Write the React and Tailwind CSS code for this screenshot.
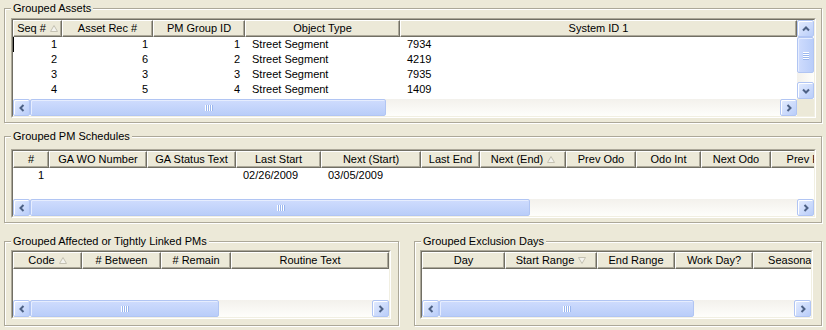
import React from "react";

const ASSET_COLS = [
  { label: "Seq #", w: "w-[49px]", sort: "up", align: "r" },
  { label: "Asset Rec #", w: "w-[91px]", align: "r" },
  { label: "PM Group ID", w: "w-[92px]", align: "r" },
  { label: "Object Type", w: "w-[155px]", align: "l" },
  { label: "System ID 1", w: "flex-1 min-w-0", align: "l" },
];

const ASSETS = [
  ["1", "1", "1", "Street Segment", "7934"],
  ["2", "6", "2", "Street Segment", "4219"],
  ["3", "3", "3", "Street Segment", "7935"],
  ["4", "5", "4", "Street Segment", "1409"],
];

const PM_COLS = [
  { label: "#", w: "w-[36px]", align: "r" },
  { label: "GA WO Number", w: "w-[98px]", align: "l" },
  { label: "GA Status Text", w: "w-[89px]", align: "l" },
  { label: "Last Start", w: "w-[85px]", align: "l" },
  { label: "Next (Start)", w: "w-[100px]", align: "l" },
  { label: "Last End", w: "w-[59px]", align: "l" },
  { label: "Next (End)", w: "w-[86px]", sort: "up", align: "l" },
  { label: "Prev Odo", w: "w-[70px]", align: "l" },
  { label: "Odo Int", w: "w-[65px]", align: "l" },
  { label: "Next Odo", w: "w-[70px]", align: "l" },
  { label: "Prev Hrs", w: "w-[74px]", align: "l" },
];

const PM_ROWS = [["1", "", "", "02/26/2009", "03/05/2009", "", "", "", "", "", ""]];

const LINK_COLS = [
  { label: "Code", w: "w-[69px]", sort: "up" },
  { label: "# Between", w: "w-[79px]" },
  { label: "# Remain", w: "w-[70px]" },
  { label: "Routine Text", w: "flex-1 min-w-0" },
];

const EXCL_COLS = [
  { label: "Day", w: "w-[83px]" },
  { label: "Start Range", w: "w-[92px]", sort: "down" },
  { label: "End Range", w: "w-[78px]" },
  { label: "Work Day?", w: "w-[78px]" },
  { label: "Seasonal", w: "w-[76px]" },
];

function Chevron({ dir }) {
  const pts = {
    left: "5.5,1 2.5,4 5.5,7",
    right: "2.5,1 5.5,4 2.5,7",
    up: "1,5.5 4,2.5 7,5.5",
    down: "1,2.5 4,5.5 7,2.5",
  }[dir];
  return (
    <svg width="8" height="8" viewBox="0 0 8 8">
      <polyline points={pts} fill="none" stroke="#4D6185" strokeWidth="2" />
    </svg>
  );
}

function ScrollButton({ dir }) {
  return (
    <div className="flex h-[17px] w-[17px] shrink-0 items-center justify-center rounded-[2px] border border-[#B1C5F3] bg-linear-to-br from-[#E4ECFE] to-[#B9CDF9] shadow-[inset_1px_1px_0_#fff]">
      <Chevron dir={dir} />
    </div>
  );
}

function Grip({ vertical }) {
  const lines = [0, 1, 2, 3];
  if (vertical) {
    return (
      <div className="flex flex-col gap-[1px]">
        {lines.map((i) => (
          <span key={i} className="block h-[1px] w-[6px] bg-white shadow-[0_1px_0_#9AB6EE]" />
        ))}
      </div>
    );
  }
  return (
    <div className="flex gap-[1px]">
      {lines.map((i) => (
        <span key={i} className="block h-[6px] w-[1px] bg-white shadow-[1px_0_0_#9AB6EE]" />
      ))}
    </div>
  );
}

function HScroll({ thumb, className }) {
  return (
    <div className={`flex h-[17px] shrink-0 bg-linear-to-b from-[#F3F1EC] to-[#FEFEFB] ${className}`}>
      <ScrollButton dir="left" />
      <div className="flex flex-1">
        <div
          className={`${thumb} flex items-center justify-center rounded-[2px] border border-[#B1C5F3] bg-linear-to-b from-[#CFDCFD] to-[#B9CDF9] shadow-[inset_1px_1px_0_#E6EDFE]`}
        >
          <Grip />
        </div>
      </div>
      <ScrollButton dir="right" />
    </div>
  );
}

function VScroll() {
  return (
    <div className="flex h-full w-[17px] shrink-0 flex-col bg-linear-to-r from-[#F3F1EC] to-[#FEFEFB]">
      <ScrollButton dir="up" />
      <div className="flex h-[36px] items-center justify-center rounded-[2px] border border-[#B1C5F3] bg-linear-to-r from-[#CFDCFD] to-[#B9CDF9] shadow-[inset_1px_1px_0_#E6EDFE]">
        <Grip vertical />
      </div>
      <div className="flex-1" />
      <ScrollButton dir="down" />
    </div>
  );
}

function SortGlyph({ down }) {
  return (
    <svg width="8" height="7" viewBox="0 0 8 7">
      <polygon
        points={down ? "0.5,0.5 7.5,0.5 4,6.5" : "4,0.5 7.5,6.5 0.5,6.5"}
        fill="#F4F3EE"
        stroke="#C4C1B2"
      />
    </svg>
  );
}

function Header({ cols }) {
  return (
    <div className="flex h-[17px] shrink-0 overflow-hidden">
      {cols.map((c) => (
        <div
          key={c.label}
          className={`${c.w} flex h-full shrink-0 items-center justify-center gap-[4px] overflow-hidden whitespace-nowrap border border-white border-b-[#716F64] border-r-[#716F64] bg-[#ECE9D8] shadow-[inset_-1px_-1px_0_#ACA899]`}
        >
          <span>{c.label}</span>
          {c.sort && <SortGlyph down={c.sort === "down"} />}
        </div>
      ))}
    </div>
  );
}

function Rows({ cols, rows, focus }) {
  return (
    <div className="flex-1 overflow-hidden bg-white">
      {rows.map((r, ri) => (
        <div
          key={ri}
          className={`flex h-[15px] leading-[15px] whitespace-nowrap border-l ${
            focus && ri === 0 ? "border-black" : "border-transparent"
          }`}
        >
          {cols.map((c, ci) => (
            <div
              key={ci}
              className={`${c.w} shrink-0 overflow-hidden ${
                c.align === "r" ? "pr-[6px] text-right" : "pl-[6px]"
              }`}
            >
              {r[ci]}
            </div>
          ))}
        </div>
      ))}
    </div>
  );
}

function Frame({ className, children }) {
  return (
    <div className={`${className} border border-[#ACA899] border-r-white border-b-white`}>
      <div className="flex h-full flex-col overflow-hidden border border-[#716F64] border-r-[#F1EFE2] border-b-[#F1EFE2] bg-white">
        {children}
      </div>
    </div>
  );
}

function GroupBox({ title, className, children }) {
  return (
    <div
      className={`relative shrink-0 border border-[#ACA899] shadow-[inset_1px_1px_0_#fff,1px_1px_0_#fff] ${className}`}
    >
      <span className="absolute left-[6px] top-[-7px] whitespace-nowrap bg-[#ECE9D8] px-[2px] leading-[13px]">
        {title}
      </span>
      {children}
    </div>
  );
}

export default function App() {
  return (
    <div className="flex h-[330px] w-[826px] flex-col overflow-hidden bg-[#ECE9D8] px-[4px] pt-[8px] font-['Liberation_Sans',Arial,sans-serif] text-[11px] text-black">
      <GroupBox title="Grouped Assets" className="h-[115px] pl-[6px] pt-[9px]">
        <Frame className="h-[100px] w-[805px]">
          <div className="flex h-[79px]">
            <div className="flex min-w-0 flex-1 flex-col">
              <Header cols={ASSET_COLS} />
              <Rows cols={ASSET_COLS} rows={ASSETS} focus />
            </div>
            <VScroll />
          </div>
          <div className="flex">
            <HScroll thumb="w-[356px]" className="flex-1" />
            <div className="h-[17px] w-[17px] bg-[#ECE9D8]" />
          </div>
        </Frame>
      </GroupBox>

      <GroupBox title="Grouped PM Schedules" className="mt-[13px] h-[87px] pl-[6px] pt-[12px]">
        <Frame className="h-[69px] w-[805px]">
          <Header cols={PM_COLS} />
          <Rows cols={PM_COLS} rows={PM_ROWS} />
          <HScroll thumb="w-[500px]" className="w-full" />
        </Frame>
      </GroupBox>

      <div className="mt-[18px] flex gap-[15px]">
        <GroupBox title="Grouped Affected or Tightly Linked PMs" className="h-[85px] w-[395px] pl-[6px] pt-[8px]">
          <Frame className="h-[69px] w-[380px]">
            <Header cols={LINK_COLS} />
            <div className="flex-1 bg-white" />
            <HScroll thumb="w-[189px]" className="w-full" />
          </Frame>
        </GroupBox>
        <GroupBox title="Grouped Exclusion Days" className="h-[85px] w-[408px] pl-[5px] pt-[8px]">
          <Frame className="h-[69px] w-[393px]">
            <Header cols={EXCL_COLS} />
            <div className="flex-1 bg-white" />
            <HScroll thumb="w-[255px]" className="w-full" />
          </Frame>
        </GroupBox>
      </div>
    </div>
  );
}
